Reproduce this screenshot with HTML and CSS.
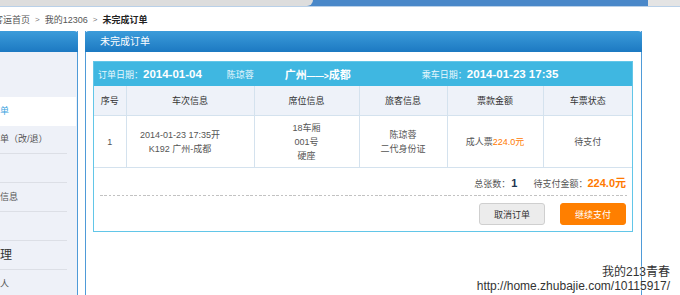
FILE: index.html
```html
<!DOCTYPE html>
<html lang="zh-CN">
<head>
<meta charset="utf-8">
<title>未完成订单</title>
<link rel="stylesheet" href="styles.css">
</head>
<body>
<div class="topbar"><div class="tb-left"></div><div class="tb-mid"></div><div class="tb-right"></div></div>
<div class="page">
  <div class="crumbs">
    <span>客运首页</span><span class="sep">&gt;</span><span>我的12306</span><span class="sep">&gt;</span><b class="cur">未完成订单</b>
  </div>
  <div class="layout">
    <aside class="side">
      <div class="side-head"></div>
      <ul class="menu">
        <li class="menu-title"></li>
        <li class="active">未完成订单</li>
        <li class="nosep">已完成订单（改/退）</li>
        <li></li>
        <li>查看个人信息</li>
        <li></li>
        <li class="menu-big">联系人管理</li>
        <li>常用联系人</li>
      </ul>
    </aside>
    <main class="panel">
      <div class="panel-head">未完成订单</div>
      <div class="panel-body">
        <div class="order">
          <div class="order-head">
            <span class="oh-label">订单日期：</span><b class="oh-date">2014-01-04</b>
            <span class="oh-name">陈琼蓉</span>
            <b class="oh-route">广州<span class="arrow">——&gt;</span>成都</b>
            <span class="oh-label oh-ride">乘车日期：</span><b class="oh-date">2014-01-23 17:35</b>
          </div>
          <table class="tickets">
            <colgroup>
              <col class="c1"><col class="c2"><col class="c3"><col class="c4"><col class="c5"><col class="c6">
            </colgroup>
            <thead>
              <tr><th>序号</th><th>车次信息</th><th>席位信息</th><th>旅客信息</th><th>票款金额</th><th>车票状态</th></tr>
            </thead>
            <tbody>
              <tr>
                <td>1</td>
                <td class="train">2014-01-23 17:35开<br>K192 广州-成都</td>
                <td>18车厢<br>001号<br>硬座</td>
                <td>陈琼蓉<br>二代身份证</td>
                <td>成人票<span class="price">224.0元</span></td>
                <td>待支付</td>
              </tr>
            </tbody>
          </table>
          <div class="summary">
            <span>总张数：</span><b class="count">1</b>
            <span class="due">待支付金额：</span><b class="total">224.0元</b>
          </div>
          <div class="dash"></div>
          <div class="actions">
            <button class="btn btn-cancel">取消订单</button>
            <button class="btn btn-pay">继续支付</button>
          </div>
        </div>
      </div>
    </main>
  </div>
</div>
<div class="watermark">我的213青春<br>http://home.zhubajie.com/10115917/</div>
</body>
</html>
```
FILE: styles.css
```css
html, body {
  margin: 0;
  padding: 0;
}
body {
  width: 680px;
  height: 295px;
  overflow: hidden;
  position: relative;
  background: #fff;
  font-family: "Liberation Sans", "Noto Sans CJK SC", sans-serif;
  font-size: 9px;
  color: #555;
}

/* top strip */
.topbar {
  display: flex;
  height: 6px;
  background: #4a88c9;
  border-bottom: 1px solid #b9d0e8;
}
.tb-left {
  width: 313px;
  background: #dddddd;
  border-bottom-right-radius: 6px;
}
.tb-mid { flex: 1; }
.tb-right {
  width: 32px;
  background: #e4e4e4;
}

.page {
  margin-left: -70px;
  width: 790px;
}

/* breadcrumb */
.crumbs {
  height: 24px;
  display: flex;
  align-items: center;
  gap: 5px;
  padding-left: 64px;
  color: #555;
}
.crumbs .sep { font-size: 8px; color: #777; }
.crumbs .cur { color: #222; }

.layout {
  display: flex;
  align-items: flex-start;
  gap: 7px;
}

/* sidebar */
.side {
  width: 147px;
  height: 264px;
  background: #eef1f8;
  border-right: 1px solid #4f9bd8;
}
.side-head {
  height: 21px;
  margin-right: -1px;
  background: linear-gradient(#3c9cda, #1c79c2);
  border-top-right-radius: 4px;
}
.menu {
  list-style: none;
  margin: 0;
  padding: 0;
}
.menu li {
  height: 28px;
  line-height: 28px;
  padding-left: 34px;
  margin-right: 10px;
  border-bottom: 1px solid #dcdfe6;
  white-space: nowrap;
  overflow: hidden;
  color: #555;
}
.menu li.menu-title {
  height: 44px;
  border-bottom: 1px solid transparent;
}
.menu li.active {
  height: 29px;
  line-height: 29px;
  margin-right: 1px;
  background: #fff;
  color: #3ea4e0;
  border-bottom: none;
}
.menu li.nosep { height: 27px; line-height: 27px; }
.menu li.menu-big {
  padding-left: 22px;
  font-size: 12px;
  color: #333;
}

/* main panel */
.panel {
  width: 555px;
  height: 264px;
  border-left: 1px solid #4f9bd8;
  border-right: 1px solid #4f9bd8;
}
.panel-head {
  height: 21px;
  line-height: 21px;
  margin: 0 -1px;
  padding-left: 15px;
  background: linear-gradient(#3c9cda, #1c79c2);
  border-radius: 4px 4px 0 0;
  color: #fff;
  font-size: 10px;
}
.panel-body {
  padding: 9px 8px 0 7px;
}
.order {
  border: 1px solid #62c6e8;
}
.order-head {
  height: 24px;
  display: flex;
  align-items: center;
  padding-left: 4px;
  background: #3fb7e1;
  color: #e9f7fd;
  white-space: nowrap;
}
.oh-date {
  color: #fff;
  font-size: 11.5px;
}
.oh-name { margin-left: 25px; }
.oh-route {
  margin-left: 31px;
  color: #fff;
  font-size: 11px;
}
.oh-route .arrow { font-size: 8.5px; }
.oh-ride { margin-left: 71px; }

/* table */
.tickets {
  width: 100%;
  border-collapse: collapse;
  table-layout: fixed;
}
.tickets .c1 { width: 32px; }
.tickets .c2 { width: 128px; }
.tickets .c3 { width: 105px; }
.tickets .c4 { width: 88px; }
.tickets .c5 { width: 96px; }
.tickets .c6 { width: 89px; }
.tickets th,
.tickets td {
  border: 1px solid #d4e2ee;
  text-align: center;
  padding: 0;
}
.tickets th:first-child,
.tickets td:first-child { border-left: none; }
.tickets th:last-child,
.tickets td:last-child { border-right: none; }
.tickets th {
  height: 29px;
  background: #eef2f9;
  font-weight: normal;
  color: #333;
  border-top: none;
}
.tickets td {
  height: 51px;
  line-height: 14px;
  color: #555;
}
.tickets td.train { padding-right: 20px; }
.price { color: #ff7a00; }

/* summary */
.summary {
  display: flex;
  justify-content: flex-end;
  align-items: baseline;
  padding: 6px 6px 0;
  height: 15px;
  color: #555;
}
.count {
  color: #1d3550;
  font-size: 11px;
  margin-left: 1px;
}
.due { margin-left: 16px; }
.total {
  color: #ff7a00;
  font-size: 11px;
}
.dash {
  height: 1px;
  margin: 6px 5px 0 6px;
  background: repeating-linear-gradient(to right, #c2c2c2 0 2.5px, transparent 2.5px 4.3px);
}
.actions {
  display: flex;
  justify-content: flex-end;
  gap: 15px;
  padding: 7px 6px 6px;
}
.btn {
  width: 66px;
  height: 22px;
  border-radius: 3px;
  font: inherit;
  padding: 0;
  cursor: pointer;
}
.btn-cancel {
  background: #ececec;
  border: 1px solid #cfcfcf;
  color: #333;
}
.btn-pay {
  background: #ff7f00;
  border: 1px solid #ff7f00;
  color: #fff;
}

/* watermark overlay */
.watermark {
  position: absolute;
  right: 10px;
  bottom: 2px;
  text-align: right;
  font-family: "Liberation Sans", "Noto Sans CJK SC", sans-serif;
  font-size: 12px;
  line-height: 14px;
  color: #333;
  text-shadow: 0 0 1px #fff, 0 0 2px #fff;
}
```
